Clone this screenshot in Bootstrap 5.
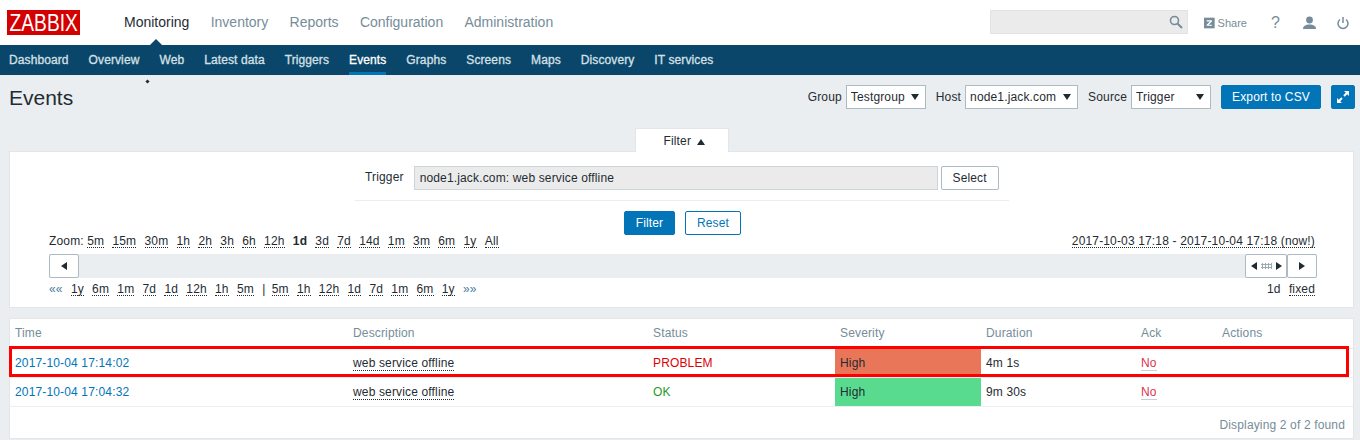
<!DOCTYPE html>
<html lang="en">
<head>
<meta charset="UTF-8" />
<title>Events</title>
<link href="https://cdn.jsdelivr.net/npm/bootstrap@5.3.0/dist/css/bootstrap.min.css" rel="stylesheet" />
<style>
body { background: #ebeef0; color: #1f2c33; font: 12px/14px Arial, "Liberation Sans", sans-serif; letter-spacing: .15px; height: 440px; overflow: hidden; position: relative; }
a { color: inherit; text-decoration: none; }
.top-bar { height: 45px; background: #fff; padding: 0 11px 0 7px; }
.zbx-logo { width: 73px; height: 25px; background: #d40000; color: #fff; line-height: 25px; text-align: center; margin-top: 10px; letter-spacing: 0; }
.zbx-logo span { display: inline-block; font-size: 24px; transform: scaleX(.8); transform-origin: center; margin: 0 -10px; }
.main-menu { margin-left: 44px; gap: 21.3px; font-size: 14px; line-height: 45px; color: #768d99; letter-spacing: 0; }
.main-menu .active-item { color: #1f2c33; position: relative; display: block; }
.active-item::after { content: ""; position: absolute; left: 26px; bottom: 0; border: 6px solid transparent; border-bottom-color: #0a466a; border-top: 0; }
.search-box { width: 198px; height: 24px; background: #ebebeb; border: 1px solid #e3e3e3; margin: 0 16px 1px 0; }
.top-tools { color: #768d99; }
.share-link { font-size: 11px; width: 43px; gap: 3px; margin-right: 24px; letter-spacing: 0; }
.sub-menu { height: 30px; background: #0a466a; color: #d5e0e6; gap: 20px; padding-left: 9px; line-height: 30px; letter-spacing: .1px; -webkit-text-stroke: .3px; }
.sub-menu a { display: block; height: 30px; }
.sub-menu .active-sub { color: #fff; border-bottom: 3px solid #0275b8; }
.cursor-dot { position: absolute; left: 146px; top: 80px; width: 3px; height: 3px; background: #1f2c33; transform: rotate(45deg); }
.head-row { height: 41px; margin: 0 5px 0 9px; padding-top: 3px; }
.head-row h1 { font-size: 21px; line-height: 24px; font-weight: 400; margin: 0; padding-top: 2px; color: #1f2c33; letter-spacing: 0; }
.head-form { gap: 4px; }
.gap-six { margin-left: 6px; }
.sel-box.form-select { width: 80px; height: 24px; padding: 0 0 0 4px; font-size: 12px; line-height: 22px; letter-spacing: .15px; border: 1px solid #acbbc3; border-radius: 0; color: #1f2c33; background-size: 8px 6px; background-position: right 6px center; background-image: url("data:image/svg+xml,%3Csvg xmlns='http://www.w3.org/2000/svg' viewBox='0 0 8 6'%3E%3Cpath d='M0 0h8L4 6z' fill='%231f2c33'/%3E%3C/svg%3E"); }
.zbx-btn { height: 24px; padding: 0; font-size: 12px; line-height: 22px; letter-spacing: .15px; border-radius: 2px; }
.zbx-blue { background: #0275b8; border: 1px solid #0275b8; color: #fff; }
.zbx-blue:hover { background: #0275b8; color: #fff; }
.zbx-outline { background: #fff; border: 1px solid #0275b8; color: #0275b8; }
.zbx-grey { background: #fff; border: 1px solid #acbbc3; color: #1f2c33; }
.filter-tab { width: 94px; height: 24px; margin: 12px 0 -1px 635px; background: #fff; border: 1px solid #e3e6e8; border-bottom: 0; line-height: 22px; text-align: center; position: relative; z-index: 1; padding: 1px 0 0 4px; }
.tab-arrow { display: inline-block; width: 0; height: 0; border: solid transparent; border-width: 0 4.5px 6px; border-bottom-color: #1f2c33; margin-left: 2px; vertical-align: 0; }
.filter-panel { height: 157px; margin: 0 6px 0 9px; background: #fff; border: 1px solid #e3e6e8; position: relative; }
.trigger-row { width: 654px; margin: 14px 0 0 345px; height: 35px; border-bottom: 1px solid #ebeef0; gap: 10px; }
.trigger-label { padding: 4px 0 0 10px; }
.trigger-input { width: 524px; height: 24px; background: #ebebeb; border: 1px solid #ccd5d9; line-height: 22px; padding-left: 5px; }
.filter-btns { gap: 10px; margin-top: 10px; padding-left: 614px; }
.time-row { padding: 0 38px 0 39px; height: 15px; }
.zoom-row { margin-top: -1px; }
.zlink { border-bottom: 1px dotted #1f2c33; display: inline-block; line-height: 12px; margin-right: 4.75px; }
.zplain { margin-right: 4.75px; }
.sep-bar { margin-right: 2.8px; }
.time-bar { height: 24px; margin: 5px 36px 4px 39px; background: #ebeef0; }
.bar-btn { width: 30px; height: 24px; background: #fff; border: 1px solid #acbbc3; border-radius: 2px; }
.tri-left { border: solid transparent; border-width: 4px 6px 4px 0; border-right-color: #1f2c33; width: 0; height: 0; }
.tri-right { border: solid transparent; border-width: 4px 0 4px 6px; border-left-color: #1f2c33; width: 0; height: 0; }
.grip-dots { width: 11px; height: 6px; margin: 0 4px; background: radial-gradient(circle, #9aabb4 1.2px, transparent 1.2px) 0 0 / 3px 3px; }
.nav-dim { color: #4a7d9c; }
.events-panel { position: relative; height: 121px; margin: 10px 6px 0 9px; background: #fff; border: 1px solid #e3e6e8; }
.events-table { width: 1343px; table-layout: fixed; border-collapse: collapse; }
.events-table th { font-weight: 400; color: #768d99; height: 29px; padding: 0 5px; border-bottom: 1px solid #e3e6e8; }
.events-table td { height: 29px; padding: 0 5px; border-bottom: 1px solid #ebeef0; }
.time-link { color: #0275b8; }
.desc-link { border-bottom: 1px dotted #1f2c33; }
.st-problem { color: #dc0000; }
.st-ok { color: #1f9c1f; }
.sev-high { background: #e97659; }
.sev-ok { background: #59db8f; }
.ack-no { color: #e0314d; border-bottom: 1px solid #c5ced3; }
.found-text { color: #768d99; text-align: right; padding: 11px 8px 0 0; }
.red-frame { position: absolute; left: -1px; top: 27px; width: 1340px; height: 31px; border: 3px solid #f00; pointer-events: none; }
</style>
</head>
<body>
  <!-- top menu -->
  <div class="top-bar d-flex">
    <a class="zbx-logo" href="#"><span>ZABBIX</span></a>
    <div class="main-menu d-flex">
      <a class="active-item" href="#">Monitoring</a>
      <a href="#">Inventory</a>
      <a href="#">Reports</a>
      <a href="#">Configuration</a>
      <a href="#">Administration</a>
    </div>
    <div class="top-tools ms-auto d-flex align-items-center">
      <div class="search-box d-flex align-items-center justify-content-end pe-1">
        <svg width="14" height="14" viewBox="0 0 14 14"><circle cx="5.5" cy="5.5" r="4" fill="none" stroke="#768d99" stroke-width="1.6"/><path d="M8.5 8.5l4.5 4.5" stroke="#768d99" stroke-width="2"/></svg>
      </div>
      <a class="share-link d-flex align-items-center" href="#">
        <svg width="12" height="12" viewBox="0 0 12 12"><rect width="12" height="12" fill="#768d99"/><path d="M3 3h6v1.4L5.200 8H9v1.200H3V7.900L6.800 4.300H3z" fill="#fff"/></svg>
        <span>Share</span>
      </a>
      <a href="#" style="font-size:16px;margin-right:23px">?</a>
      <svg style="margin-right:21px" width="13" height="14" viewBox="0 0 13 14"><circle cx="6.500" cy="4" r="3.400" fill="#768d99"/><path d="M0 13c0-3 2.500-4.500 6.500-4.500s6.500 1.500 6.500 4.500z" fill="#768d99"/></svg>
      <svg width="12" height="14" viewBox="0 0 12 14"><path d="M3 3.500a5 5 0 1 0 6 0" fill="none" stroke="#768d99" stroke-width="1.500"/><path d="M6 1v6" stroke="#768d99" stroke-width="1.500"/></svg>
    </div>
  </div>
  <div class="sub-menu d-flex">
    <a href="#">Dashboard</a><a href="#">Overview</a><a href="#">Web</a><a href="#">Latest data</a><a href="#">Triggers</a>
    <a class="active-sub" href="#">Events</a>
    <a href="#">Graphs</a><a href="#">Screens</a><a href="#">Maps</a><a href="#">Discovery</a><a href="#">IT services</a>
  </div>
  <div class="cursor-dot"></div>

  <!-- page title and header form -->
  <div class="head-row d-flex justify-content-between align-items-center">
    <h1>Events</h1>
    <div class="head-form d-flex align-items-center">
      <span>Group</span>
      <select class="sel-box form-select"><option>Testgroup</option></select>
      <span class="gap-six">Host</span>
      <select class="sel-box form-select" style="width:113px"><option>node1.jack.com</option></select>
      <span class="gap-six">Source</span>
      <select class="sel-box form-select"><option>Trigger</option></select>
      <button class="btn zbx-btn zbx-blue gap-six" style="width:100px">Export to CSV</button>
      <button class="btn zbx-btn zbx-blue gap-six d-flex align-items-center justify-content-center" style="width:24px">
        <svg width="14" height="14" viewBox="0 0 14 14"><path d="M8 1h5v5l-1.800-1.800-2.500 2.500-1.400-1.400 2.500-2.500zM6 13H1V8l1.800 1.800 2.500-2.500 1.400 1.400-2.500 2.500z" fill="#fff"/></svg>
      </button>
    </div>
  </div>

  <!-- filter -->
  <div class="filter-tab">Filter <span class="tab-arrow"></span></div>
  <div class="filter-panel">
    <div class="trigger-row d-flex align-items-start">
      <span class="trigger-label">Trigger</span>
      <div class="trigger-input">node1.jack.com: web service offline</div>
      <button class="btn zbx-btn zbx-grey" style="width:58px;margin-left:-7px">Select</button>
    </div>
    <div class="filter-btns d-flex">
      <button class="btn zbx-btn zbx-blue" style="width:51px">Filter</button>
      <button class="btn zbx-btn zbx-outline" style="width:56px">Reset</button>
    </div>
    <div class="time-row zoom-row d-flex justify-content-between">
      <div>Zoom: <a class="zlink" href="#">5m</a> <a class="zlink" href="#">15m</a> <a class="zlink" href="#">30m</a> <a class="zlink" href="#">1h</a> <a class="zlink" href="#">2h</a> <a class="zlink" href="#">3h</a> <a class="zlink" href="#">6h</a> <a class="zlink" href="#">12h</a> <b class="zplain">1d</b> <a class="zlink" href="#">3d</a> <a class="zlink" href="#">7d</a> <a class="zlink" href="#">14d</a> <a class="zlink" href="#">1m</a> <a class="zlink" href="#">3m</a> <a class="zlink" href="#">6m</a> <a class="zlink" href="#">1y</a> <a class="zlink" href="#">All</a></div>
      <div><a class="zlink m-0" href="#">2017-10-03 17:18</a> - <a class="zlink m-0" href="#">2017-10-04 17:18 (now!)</a></div>
    </div>
    <div class="time-bar d-flex justify-content-between">
      <button class="bar-btn d-flex align-items-center justify-content-center p-0"><span class="tri-left"></span></button>
      <div class="d-flex">
        <button class="bar-btn d-flex align-items-center justify-content-center p-0" style="width:42px"><span class="tri-left"></span><span class="grip-dots"></span><span class="tri-right"></span></button>
        <button class="bar-btn d-flex align-items-center justify-content-center p-0"><span class="tri-right"></span></button>
      </div>
    </div>
    <div class="time-row d-flex justify-content-between">
      <div><span class="nav-dim zplain">««</span> <a class="zlink" href="#">1y</a> <a class="zlink" href="#">6m</a> <a class="zlink" href="#">1m</a> <a class="zlink" href="#">7d</a> <a class="zlink" href="#">1d</a> <a class="zlink" href="#">12h</a> <a class="zlink" href="#">1h</a> <a class="zlink" href="#">5m</a> <span class="sep-bar">|</span> <a class="zlink" href="#">5m</a> <a class="zlink" href="#">1h</a> <a class="zlink" href="#">12h</a> <a class="zlink" href="#">1d</a> <a class="zlink" href="#">7d</a> <a class="zlink" href="#">1m</a> <a class="zlink" href="#">6m</a> <a class="zlink" href="#">1y</a> <span class="nav-dim">»»</span></div>
      <div><span class="zplain">1d</span> <a class="zlink m-0" href="#">fixed</a></div>
    </div>
  </div>

  <!-- events list -->
  <div class="events-panel">
    <table class="events-table">
      <colgroup><col style="width:338px"><col style="width:300px"><col style="width:187px"><col style="width:146px"><col style="width:155px"><col style="width:81px"><col></colgroup>
      <thead>
        <tr><th>Time</th><th>Description</th><th>Status</th><th>Severity</th><th>Duration</th><th>Ack</th><th>Actions</th></tr>
      </thead>
      <tbody>
        <tr><td><a class="time-link" href="#">2017-10-04 17:14:02</a></td><td><a class="desc-link" href="#">web service offline</a></td><td class="st-problem">PROBLEM</td><td class="sev-high">High</td><td>4m 1s</td><td><a class="ack-no" href="#">No</a></td><td></td></tr>
        <tr><td><a class="time-link" href="#">2017-10-04 17:04:32</a></td><td><a class="desc-link" href="#">web service offline</a></td><td class="st-ok">OK</td><td class="sev-ok">High</td><td>9m 30s</td><td><a class="ack-no" href="#">No</a></td><td></td></tr>
      </tbody>
    </table>
    <div class="found-text">Displaying 2 of 2 found</div>
    <div class="red-frame"></div>
  </div>
</body>
</html>
